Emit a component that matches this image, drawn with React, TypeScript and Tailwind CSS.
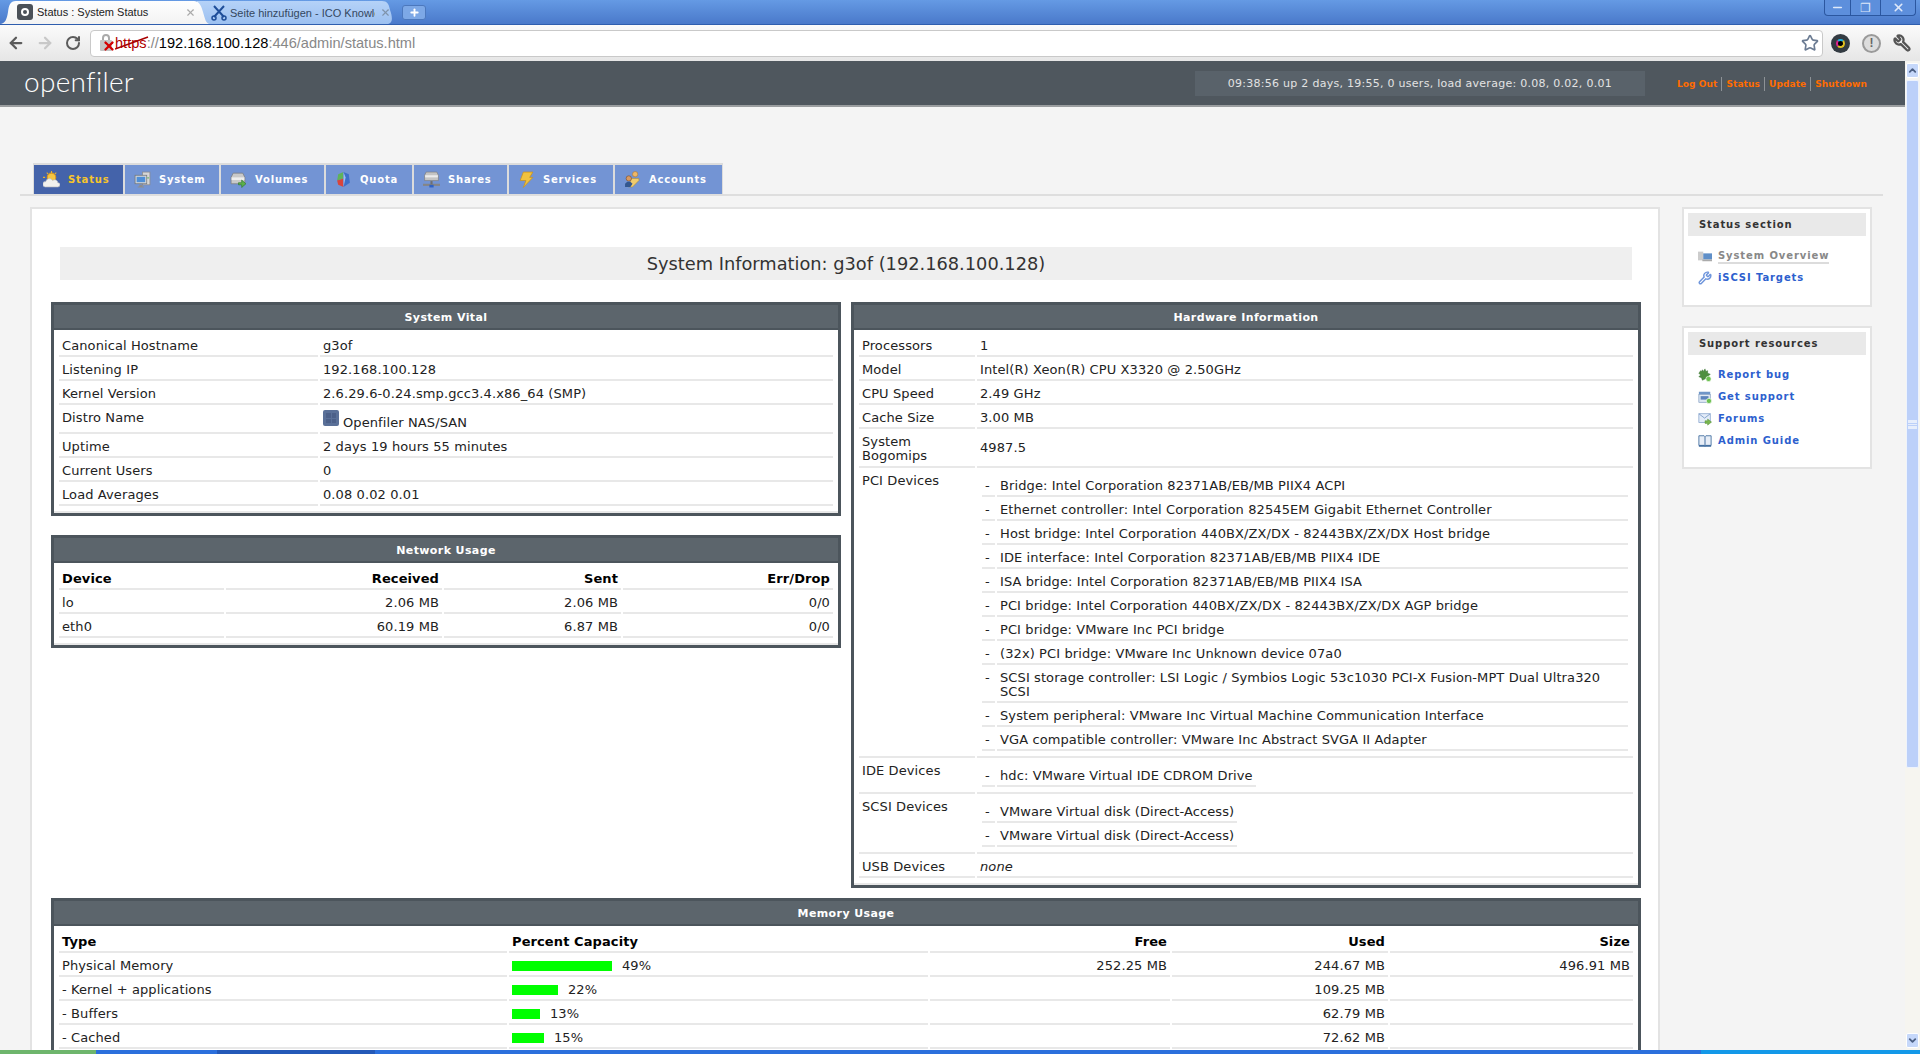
import type { ReactNode } from "react";
import { ArrowLeft, ArrowRight, RotateCw, Star, Wrench, X, Plus, Minus, ChevronUp, ChevronDown } from "lucide-react";

const cell = "border-b-2 border-[#e8e8e8] px-[3px] pt-[6px] pb-[2px] align-top";

const tabs = [
  { label: "Status", width: "w-[89px]", icon: <SunIcon />, active: true },
  { label: "System", width: "w-[94px]", icon: <ComputerIcon /> },
  { label: "Volumes", width: "w-[103px]", icon: <DriveIcon /> },
  { label: "Quota", width: "w-[86px]", icon: <PieIcon /> },
  { label: "Shares", width: "w-[93px]", icon: <ServerIcon /> },
  { label: "Services", width: "w-[104px]", icon: <BoltIcon /> },
  { label: "Accounts", width: "w-[107px]", icon: <UsersIcon /> },
];

const vitals: [string, ReactNode][] = [
  ["Canonical Hostname", "g3of"],
  ["Listening IP", "192.168.100.128"],
  ["Kernel Version", "2.6.29.6-0.24.smp.gcc3.4.x86_64 (SMP)"],
  [
    "Distro Name",
    <span className="-mt-px flex h-[20px] items-start">
      <span className="grid h-[16px] w-[16px] grid-cols-2 gap-px rounded-[2px] bg-[#5a7098] p-[3px]">
        <i className="bg-[#4c6089]" />
        <i className="bg-[#4c6089]" />
        <i className="bg-[#4c6089]" />
        <i className="bg-[#4c6089]" />
      </span>
      <span className="mt-[6px] ml-[4px]">Openfiler NAS/SAN</span>
    </span>,
  ],
  ["Uptime", "2 days 19 hours 55 minutes"],
  ["Current Users", "0"],
  ["Load Averages", "0.08 0.02 0.01"],
];

const network = [
  ["lo", "2.06 MB", "2.06 MB", "0/0"],
  ["eth0", "60.19 MB", "6.87 MB", "0/0"],
];

const pci = [
  "Bridge: Intel Corporation 82371AB/EB/MB PIIX4 ACPI",
  "Ethernet controller: Intel Corporation 82545EM Gigabit Ethernet Controller",
  "Host bridge: Intel Corporation 440BX/ZX/DX - 82443BX/ZX/DX Host bridge",
  "IDE interface: Intel Corporation 82371AB/EB/MB PIIX4 IDE",
  "ISA bridge: Intel Corporation 82371AB/EB/MB PIIX4 ISA",
  "PCI bridge: Intel Corporation 440BX/ZX/DX - 82443BX/ZX/DX AGP bridge",
  "PCI bridge: VMware Inc PCI bridge",
  "(32x) PCI bridge: VMware Inc Unknown device 07a0",
  "SCSI storage controller: LSI Logic / Symbios Logic 53c1030 PCI-X Fusion-MPT Dual Ultra320 SCSI",
  "System peripheral: VMware Inc Virtual Machine Communication Interface",
  "VGA compatible controller: VMware Inc Abstract SVGA II Adapter",
];

const memory = [
  { type: "Physical Memory", bar: 100, pct: "49%", free: "252.25 MB", used: "244.67 MB", size: "496.91 MB" },
  { type: "- Kernel + applications", bar: 46, pct: "22%", free: "", used: "109.25 MB", size: "" },
  { type: "- Buffers", bar: 28, pct: "13%", free: "", used: "62.79 MB", size: "" },
  { type: "- Cached", bar: 32, pct: "15%", free: "", used: "72.62 MB", size: "" },
];

function SunIcon() {
  return (
    <svg viewBox="0 0 16 16" className="h-[17px] w-[17px]">
      <circle cx="8" cy="6" r="4" fill="#f5c542" stroke="#d9981e" />
      <path d="M8 0v2M2 6H0M3.5 1.5l1.2 1.2M12.5 1.5l-1.2 1.2" stroke="#e8b030" />
      <path d="M2 15a2.5 2.5 0 0 1 .5-5 3.5 3.5 0 0 1 6.5-1 3 3 0 0 1 5 2 2 2 0 0 1 0 4z" fill="#f1f1ee" stroke="#b9bcc0" strokeWidth=".6" />
    </svg>
  );
}

function ComputerIcon() {
  return (
    <svg viewBox="0 0 16 16" className="h-[17px] w-[17px]">
      <rect x="8" y="1" width="7" height="12" fill="#d6d6d6" stroke="#8b8b8b" strokeWidth=".7" />
      <rect x="1" y="4" width="11" height="8" fill="#cfd4d8" stroke="#70767c" strokeWidth=".7" />
      <rect x="2.5" y="5.5" width="8" height="5" fill="#4f8fd8" />
      <path d="M5 13h3v1.5H9.500V15.500H3.500V14.500H5z" fill="#8d8d8d" />
      <rect x="12.500" y="6" width="1.500" height="1" fill="#4fae4f" />
    </svg>
  );
}

function DriveIcon() {
  return (
    <svg viewBox="0 0 16 16" className="h-[17px] w-[17px]">
      <path d="M3 2h9l2 4v6H1V6z" fill="#c9c9c9" stroke="#7d7d7d" strokeWidth=".7" />
      <rect x="1.500" y="6" width="12" height="2.500" fill="#eeeeee" />
      <path d="M8 11h3V8.500l4 3.500-4 3.500V13H8z" fill="#5cb04a" stroke="#2f7a2a" strokeWidth=".6" />
    </svg>
  );
}

function PieIcon() {
  return (
    <svg viewBox="0 0 16 16" className="h-[17px] w-[17px]">
      <path d="M8 1 3 3 2 9l6-2z" fill="#5fb35a" />
      <path d="M2 9l1 4 5 2V7z" fill="#d9443c" />
      <path d="M8 1l5 2 1 8-6 4z" fill="#3e6fc9" />
      <path d="M8 1l2 5-2 9z" fill="#9dbcef" />
    </svg>
  );
}

function ServerIcon() {
  return (
    <svg viewBox="0 0 16 16" className="h-[17px] w-[17px]">
      <path d="M3 1h10l1.500 3v5h-13V4z" fill="#c4c4c4" stroke="#7b7b7b" strokeWidth=".6" />
      <rect x="2" y="4" width="12" height="2" fill="#ececec" />
      <rect x="0" y="12" width="16" height="2" fill="#858585" />
      <rect x="7" y="9.500" width="2" height="3" fill="#707070" />
      <rect x="6" y="13" width="4" height="2.500" fill="#2f62c4" />
    </svg>
  );
}

function BoltIcon() {
  return (
    <svg viewBox="0 0 16 16" className="h-[17px] w-[17px]">
      <path d="M5 1h9l-3 5h3L5 15.500 7.500 9H2z" fill="#f0c23e" stroke="#c8901c" strokeWidth=".7" />
    </svg>
  );
}

function UsersIcon() {
  return (
    <svg viewBox="0 0 16 16" className="h-[17px] w-[17px]">
      <circle cx="10.500" cy="3" r="2.500" fill="#edb868" stroke="#a8702a" strokeWidth=".5" />
      <path d="M7 7h7v2l-6 6H4z" fill="#efcb6d" stroke="#b08a2c" strokeWidth=".5" />
      <circle cx="4.500" cy="7" r="2.500" fill="#d99a62" stroke="#6b4020" strokeWidth=".5" />
      <path d="M1 15v-3l2-2h3l2 2-2 3z" fill="#33578f" />
    </svg>
  );
}

function Box({ title, children }: { title: string; children: ReactNode }) {
  return (
    <div className="border-[3px] border-[#4c555c] bg-white">
      <div className="h-[25px] border-b-2 border-[#4c555c] bg-[#5c656c] text-center text-[11px] leading-[25px] font-bold tracking-[0.4px] text-white">
        {title}
      </div>
      <div className="border-b-2 border-[#e8e8e8] px-[3px] pt-[3px] pb-[5px]">{children}</div>
    </div>
  );
}

function NestedList({ items, full }: { items: string[]; full?: boolean }) {
  return (
    <table className={`border-separate [border-spacing:2px_0] ${full ? "w-full" : ""}`}>
      <tbody>
        {items.map((item, i) => (
          <tr key={i}>
            <td className={`${cell} w-[13px] whitespace-nowrap`}>-</td>
            <td className={cell}>{item}</td>
          </tr>
        ))}
      </tbody>
    </table>
  );
}

function SideCard({ title, children, height }: { title: string; children: ReactNode; height: string }) {
  return (
    <div className={`border-2 border-[#e3e3e3] bg-white px-[4px] pt-[4px] ${height}`}>
      <div className="h-[23px] bg-[#e9e9e9] pl-[11px] text-[10px] leading-[24px] font-bold tracking-[0.9px] text-[#333]">
        {title}
      </div>
      <div className="pt-[9px] pl-[10px]">{children}</div>
    </div>
  );
}

function SideLink({ icon, label, muted }: { icon: ReactNode; label: string; muted?: boolean }) {
  return (
    <div className="flex h-[22px] items-center text-[10px] font-bold tracking-[0.9px]">
      <span className="flex w-[20px] shrink-0">{icon}</span>
      {muted ? (
        <span className="border-b-2 border-[#dcdcdc] leading-[13px] text-[#888]">{label}</span>
      ) : (
        <span className="text-[#2d5fce]">{label}</span>
      )}
    </div>
  );
}

export default function App() {
  return (
    <div className="flex h-[1054px] w-[1920px] flex-col overflow-hidden bg-[#f4f4f4] font-['DejaVu_Sans',sans-serif] text-[12px] leading-[14px] text-[#222]">
      {/* window title strip with browser tabs */}
      <div className="flex h-[25px] shrink-0 items-end justify-between border-b border-[#2f5eae] bg-gradient-to-b from-[#659ae4] to-[#4a79ca] font-['Liberation_Sans',sans-serif]">
        <div className="flex items-end">
          <div className="relative z-10 flex h-[24px] w-[210px] items-center bg-gradient-to-b from-white to-[#f3f3f3] pr-[14px] pl-[17px] [clip-path:path('M0,24C5,24,7,19,8,12C9,5,10,1,16,1L194,1C199,1,201,5,203,12C205,19,206,24,210,24Z')]">
            <span className="flex h-[16px] w-[16px] items-center justify-center rounded-[3px] bg-[#4b5158]">
              <span className="h-[8px] w-[8px] rounded-full border-2 border-white" />
            </span>
            <span className="ml-[4px] flex-1 text-[11px] whitespace-nowrap text-[#222]">Status : System Status</span>
            <X size={11} className="text-[#aaa]" strokeWidth={2.5} />
          </div>
          <div className="-ml-[13px] flex h-[23px] w-[205px] items-center bg-gradient-to-b from-[#b5d2f8] to-[#9cc0f0] pl-[14px] [clip-path:path('M0,23L190,23C194,23,197,20,193,9C192,3,190,0,185,0L0,0Z')]">
            <svg viewBox="0 0 16 16" className="h-[16px] w-[16px] shrink-0">
              <path d="M3 1l10 11M13 1 3 12" stroke="#1f4e99" strokeWidth="2" />
              <circle cx="3" cy="13" r="2" fill="none" stroke="#1f4e99" strokeWidth="1.500" />
              <circle cx="13" cy="13" r="2" fill="none" stroke="#1f4e99" strokeWidth="1.500" />
            </svg>
            <span className="ml-[3px] w-[145px] overflow-hidden text-[11px] whitespace-nowrap text-[#34475e]">
              Seite hinzufügen - ICO Knowle
            </span>
            <X size={11} className="ml-[5px] shrink-0 text-[#7f93ab]" strokeWidth={2.5} />
          </div>
          <div className="mb-[4px] flex h-[15px] w-[24px] items-center justify-center rounded-[3px] border border-[#4c78bd] bg-[#7da8e6]">
            <Plus size={11} strokeWidth={4} className="text-white" />
          </div>
        </div>
        <div className="mr-[4px] mb-[8px] flex h-[16px] w-[92px] rounded-b-[4px] border border-t-0 border-[#2b57a0] bg-[#5d8fdc] text-[#dfe9fa]">
          <div className="flex w-[26px] items-center justify-center border-r border-[#2b57a0]">
            <Minus size={13} strokeWidth={3} />
          </div>
          <div className="flex w-[30px] items-center justify-center border-r border-[#2b57a0] text-[12px]">❐</div>
          <div className="flex flex-1 items-center justify-center">
            <X size={13} strokeWidth={3} />
          </div>
        </div>
      </div>

      {/* browser toolbar */}
      <div className="flex h-[36px] shrink-0 items-center bg-gradient-to-b from-[#fbfbfb] to-[#e6e6e6] font-['Liberation_Sans',sans-serif]">
        <div className="flex w-[90px] items-center pl-[7px]">
          <ArrowLeft size={18} strokeWidth={3} className="text-[#5b5b5b]" />
          <ArrowRight size={18} strokeWidth={3} className="ml-[11px] text-[#c8c8c8]" />
          <RotateCw size={16} strokeWidth={3} className="ml-[11px] text-[#5b5b5b]" />
        </div>
        <div className="flex h-[27px] w-[1733px] items-center rounded-[4px] border border-[#c9c9c9] bg-white pr-[3px] pl-[8px]">
          <span className="relative h-[18px] w-[16px]">
            <span className="absolute top-0 left-[3px] h-[8px] w-[8px] rounded-t-full border-2 border-[#aaa]" />
            <span className="absolute top-[6px] left-[1px] h-[11px] w-[12px] rounded-[1px] bg-[#c4c4c4]" />
            <X size={14} strokeWidth={4} className="absolute top-[5px] left-[3px] text-[#d40000]" />
          </span>
          <span className="flex-1 text-[14.6px] whitespace-nowrap text-[#888]">
            <span className="relative text-[#b00000]">
              https
              <svg viewBox="0 0 34 14" className="absolute top-[1px] left-0 h-[14px] w-[34px]">
                <path d="M0 13 33 1" stroke="#a80000" strokeWidth="1.500" />
              </svg>
            </span>
            ://
            <span className="text-black">192.168.100.128</span>:446/admin/status.html
          </span>
          <Star size={18} strokeWidth={2.2} className="text-[#6b7b92]" />
        </div>
        <div className="flex flex-1 items-center pl-[8px]">
          <span className="flex h-[19px] w-[19px] items-center justify-center rounded-full bg-[#333b42]">
            <span className="h-[9px] w-[9px] rounded-full border-2 border-[#e0c020] border-t-[#20b0e0] border-l-[#e0208c] bg-black" />
          </span>
          <span className="ml-[12px] flex h-[19px] w-[19px] items-center justify-center rounded-full border-2 border-[#9a9a9a] bg-[#ddd] text-[12px] font-bold text-[#666]">
            !
          </span>
          <Wrench size={18} strokeWidth={3} className="ml-[12px] -scale-x-100 text-[#555]" />
        </div>
      </div>

      <div className="flex min-h-0 flex-1">
        {/* scrolling page */}
        <div className="min-w-0 flex-1 overflow-hidden">
          <header className="flex h-[46px] items-start justify-between border-b-2 border-[#9a9d9f] bg-[#4f575e]">
            <div className="ml-[24px] font-['Lato',sans-serif] text-[28px] leading-[40px] font-light tracking-[0.3px] text-white">
              openfiler
            </div>
            <div className="mr-[38px] flex items-center pt-[10px]">
              <div className="flex h-[25px] w-[450px] items-center justify-center bg-[#59626a] text-[11px] tracking-[0.27px] text-[#e3e3e3]">
                09:38:56 up 2 days, 19:55, 0 users, load average: 0.08, 0.02, 0.01
              </div>
              <div className="ml-[32px] flex items-center text-[9px] font-bold tracking-[0.1px] whitespace-nowrap text-[#ff6c00]">
                <span className="border-r border-[#8d9296] pr-[4px]">Log Out</span>
                <span className="border-r border-[#8d9296] px-[4px]">Status</span>
                <span className="border-r border-[#8d9296] px-[4px]">Update</span>
                <span className="pl-[4px]">Shutdown</span>
              </div>
            </div>
          </header>

          {/* tabs */}
          <div className="mt-[56px] ml-[20px] w-[1863px] border-b-2 border-[#dedede]">
            <nav className="ml-[13px] flex w-fit gap-[2px] bg-[#dcdcdc] px-px pt-[2px]">
              {tabs.map((t) => (
                <div
                  key={t.label}
                  className={`flex h-[29px] items-center gap-[8px] pl-[9px] text-[10px] font-bold tracking-[0.8px] ${t.width} ${
                    t.active ? "bg-[#4463aa] text-[#f7c52a]" : "bg-[#7394d4] text-white"
                  }`}
                >
                  {t.icon}
                  {t.label}
                </div>
              ))}
            </nav>
          </div>

          <div className="mt-[11px] flex pl-[30px]">
            {/* main card */}
            <main className="h-[900px] w-[1630px] shrink-0 border-2 border-b-0 border-[#e3e3e3] bg-white pt-[38px] pr-[17px] pl-[19px] text-[13px] tracking-[0.1px]">
              <h1 className="mr-[9px] ml-[9px] h-[33px] bg-[#efefef] text-center text-[17.8px] leading-[34px] font-normal tracking-normal text-[#333]">
                System Information: g3of (192.168.100.128)
              </h1>

              <div className="mt-[22px] grid grid-cols-2 items-start gap-[10px]">
                <div className="flex flex-col gap-[19px]">
                  <Box title="System Vital">
                    <table className="w-full table-fixed border-separate [border-spacing:2px_0]">
                      <colgroup>
                        <col className="w-[259px]" />
                        <col />
                      </colgroup>
                      <tbody>
                        {vitals.map(([k, v]) => (
                          <tr key={k}>
                            <td className={cell}>{k}</td>
                            <td className={cell}>{v}</td>
                          </tr>
                        ))}
                      </tbody>
                    </table>
                  </Box>
                  <Box title="Network Usage">
                    <table className="w-full table-fixed border-separate [border-spacing:2px_0]">
                      <colgroup>
                        <col className="w-[165px]" />
                        <col className="w-[216px]" />
                        <col className="w-[177px]" />
                        <col />
                      </colgroup>
                      <thead>
                        <tr className="font-bold text-black">
                          <td className={cell}>Device</td>
                          <td className={`${cell} text-right`}>Received</td>
                          <td className={`${cell} text-right`}>Sent</td>
                          <td className={`${cell} text-right`}>Err/Drop</td>
                        </tr>
                      </thead>
                      <tbody>
                        {network.map((r) => (
                          <tr key={r[0]}>
                            <td className={cell}>{r[0]}</td>
                            <td className={`${cell} text-right`}>{r[1]}</td>
                            <td className={`${cell} text-right`}>{r[2]}</td>
                            <td className={`${cell} text-right`}>{r[3]}</td>
                          </tr>
                        ))}
                      </tbody>
                    </table>
                  </Box>
                </div>

                <Box title="Hardware Information">
                  <table className="w-full table-fixed border-separate [border-spacing:2px_0]">
                    <colgroup>
                      <col className="w-[116px]" />
                      <col />
                    </colgroup>
                    <tbody>
                      <tr>
                        <td className={cell}>Processors</td>
                        <td className={cell}>1</td>
                      </tr>
                      <tr>
                        <td className={cell}>Model</td>
                        <td className={cell}>Intel(R) Xeon(R) CPU X3320 @ 2.50GHz</td>
                      </tr>
                      <tr>
                        <td className={cell}>CPU Speed</td>
                        <td className={cell}>2.49 GHz</td>
                      </tr>
                      <tr>
                        <td className={cell}>Cache Size</td>
                        <td className={cell}>3.00 MB</td>
                      </tr>
                      <tr>
                        <td className="border-b-2 border-[#e8e8e8] px-[3px] pt-[6px] pb-[3px] align-top">
                          System
                          <br />
                          Bogomips
                        </td>
                        <td className="border-b-2 border-[#e8e8e8] px-[3px] pt-[3px] pb-[3px] align-middle">4987.5</td>
                      </tr>
                      <tr>
                        <td className={cell}>PCI Devices</td>
                        <td className="border-b-2 border-[#e8e8e8] px-[3px] py-[5px]">
                          <NestedList items={pci} full />
                        </td>
                      </tr>
                      <tr>
                        <td className={cell}>IDE Devices</td>
                        <td className="border-b-2 border-[#e8e8e8] px-[3px] py-[5px]">
                          <NestedList items={["hdc: VMware Virtual IDE CDROM Drive"]} />
                        </td>
                      </tr>
                      <tr>
                        <td className={cell}>SCSI Devices</td>
                        <td className="border-b-2 border-[#e8e8e8] px-[3px] py-[5px]">
                          <NestedList items={["VMware Virtual disk (Direct-Access)", "VMware Virtual disk (Direct-Access)"]} />
                        </td>
                      </tr>
                      <tr>
                        <td className={cell}>USB Devices</td>
                        <td className={`${cell} italic`}>none</td>
                      </tr>
                    </tbody>
                  </table>
                </Box>
              </div>

              <div className="mt-[10px]">
                <Box title="Memory Usage">
                  <table className="w-full table-fixed border-separate [border-spacing:2px_0]">
                    <colgroup>
                      <col className="w-[448px]" />
                      <col className="w-[419px]" />
                      <col className="w-[240px]" />
                      <col className="w-[216px]" />
                      <col />
                    </colgroup>
                    <thead>
                      <tr className="font-bold text-black">
                        <td className={cell}>Type</td>
                        <td className={cell}>Percent Capacity</td>
                        <td className={`${cell} text-right`}>Free</td>
                        <td className={`${cell} text-right`}>Used</td>
                        <td className={`${cell} text-right`}>Size</td>
                      </tr>
                    </thead>
                    <tbody>
                      {memory.map((m) => (
                        <tr key={m.type}>
                          <td className={cell}>{m.type}</td>
                          <td className={cell}>
                            <span className="flex items-center">
                              <span className="mr-[10px] h-[10px] bg-[#00ff00]" style={{ width: m.bar }} />
                              {m.pct}
                            </span>
                          </td>
                          <td className={`${cell} text-right`}>{m.free || "\u00a0"}</td>
                          <td className={`${cell} text-right`}>{m.used}</td>
                          <td className={`${cell} text-right`}>{m.size || "\u00a0"}</td>
                        </tr>
                      ))}
                    </tbody>
                  </table>
                </Box>
              </div>
            </main>

            {/* sidebar */}
            <aside className="ml-[22px] flex w-[190px] shrink-0 flex-col gap-[19px]">
              <SideCard title="Status section" height="h-[100px]">
                <SideLink
                  muted
                  label="System Overview"
                  icon={
                    <svg viewBox="0 0 16 16" className="h-[14px] w-[14px]">
                      <rect x="0" y="3" width="6" height="10" fill="#ccc" />
                      <rect x="6" y="5" width="10" height="7" fill="#5f8fc8" />
                      <rect x="5" y="12" width="11" height="2" fill="#aaa" />
                    </svg>
                  }
                />
                <SideLink
                  label="iSCSI Targets"
                  icon={<Wrench size={14} strokeWidth={2.5} className="text-[#6f96dc]" />}
                />
              </SideCard>
              <SideCard title="Support resources" height="h-[143px]">
                <SideLink
                  label="Report bug"
                  icon={
                    <svg viewBox="0 0 16 16" className="h-[14px] w-[14px]">
                      <path d="M3 3l1 1 1-2 1 2 2-3 1 3 2-1v3l3 1-2 2 1 3H9L5 14l-1-3-3-1 2-2-2-2z" fill="#4f8f3f" stroke="#2d6a2a" strokeWidth=".5" />
                      <circle cx="12" cy="12.500" r="3" fill="#6cc04f" stroke="#fff" strokeWidth=".7" />
                    </svg>
                  }
                />
                <SideLink
                  label="Get support"
                  icon={
                    <svg viewBox="0 0 16 16" className="h-[14px] w-[14px]">
                      <rect x="1" y="2" width="13" height="3" fill="#6f96c8" />
                      <rect x="1" y="5" width="13" height="9" fill="#dfe8f4" stroke="#6f8fb8" strokeWidth=".7" />
                      <rect x="3" y="7" width="9" height="4" fill="#5d84bc" />
                      <circle cx="12.500" cy="12.500" r="3" fill="#6cc04f" stroke="#fff" strokeWidth=".7" />
                    </svg>
                  }
                />
                <SideLink
                  label="Forums"
                  icon={
                    <svg viewBox="0 0 16 16" className="h-[14px] w-[14px]">
                      <rect x="1" y="2" width="13" height="10" fill="#e3ecf8" stroke="#7c9cc8" strokeWidth=".8" />
                      <path d="M1 2l6.500 5L14 2" fill="none" stroke="#7c9cc8" />
                      <path d="M8 10h3V8l4.500 3.500L11 15v-2H8z" fill="#79b64f" stroke="#4f8a30" strokeWidth=".5" />
                    </svg>
                  }
                />
                <SideLink
                  label="Admin Guide"
                  icon={
                    <svg viewBox="0 0 16 16" className="h-[14px] w-[14px]">
                      <path d="M1 2h6l1 1 1-1h6v11H9l-1 1-1-1H1z" fill="#e8eef7" stroke="#2f5f96" strokeWidth=".9" />
                      <path d="M8 3v10" stroke="#2f5f96" />
                      <rect x="1" y="13" width="14" height="1.500" fill="#2f5f96" />
                    </svg>
                  }
                />
              </SideCard>
            </aside>
          </div>
        </div>

        {/* browser scrollbar */}
        <div className="flex w-[15px] shrink-0 flex-col bg-[#f6f5f0] px-px py-[2px]">
          <div className="flex h-[15px] items-center justify-center rounded-[2px] border border-white bg-[#c6d8fa] text-[#4d6185]">
            <ChevronUp size={11} strokeWidth={4} />
          </div>
          <div className="mt-[2px] flex h-[688px] items-center justify-center rounded-[2px] border border-[#eef3fd] bg-[#bcd0f9]">
            <span className="h-[9px] w-[9px] border-y-2 border-[#e7eefc] bg-[repeating-linear-gradient(#e7eefc_0_1px,transparent_1px_2px)]" />
          </div>
          <div className="flex-1" />
          <div className="flex h-[15px] items-center justify-center rounded-[2px] border border-white bg-[#c6d8fa] text-[#4d6185]">
            <ChevronDown size={11} strokeWidth={4} />
          </div>
        </div>
      </div>

      {/* windows taskbar */}
      <div className="flex h-[4px] shrink-0 bg-[#2b6fdc]">
        <div className="w-[96px] bg-[#6eb56c]" />
        <div className="ml-[121px] w-[158px] bg-[#2459b8]" />
        <div className="flex-1" />
        <div className="w-[219px] bg-[#1398e8]" />
      </div>
    </div>
  );
}
